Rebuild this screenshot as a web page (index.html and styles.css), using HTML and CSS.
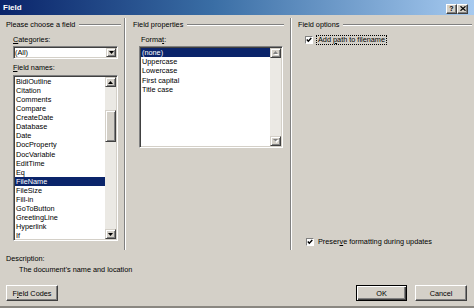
FILE: index.html
```html
<!DOCTYPE html>
<html>
<head>
<meta charset="utf-8">
<title>Field</title>
<link rel="stylesheet" href="styles.css">
</head>
<body>
<div class="window">
  <div class="titlebar">
    <span class="title">Field</span>
    <div class="tb-buttons">
      <span class="tb-btn">?</span>
      <span class="tb-btn"><svg width="6" height="5" viewBox="0 0 6 5"><path d="M0.5 0.3 L5.5 4.7 M5.5 0.3 L0.5 4.7" stroke="#000" stroke-width="1.2"/></svg></span>
    </div>
  </div>

  <div class="columns">
    <section class="col col1">
      <div class="group-head"><span>Please choose a field</span><i class="groove"></i></div>
      <div class="label"><u>C</u>ategories:</div>
      <div class="combo">
        <span class="combo-text">(All)</span>
        <span class="sb-btn"><svg width="5" height="3" viewBox="0 0 5 3"><path d="M0 0 H5 L2.5 3 Z" fill="#000"/></svg></span>
      </div>
      <div class="label"><u>F</u>ield names:</div>
      <div class="listbox names">
        <ul class="items">
          <li>BidiOutline</li>
          <li>Citation</li>
          <li>Comments</li>
          <li>Compare</li>
          <li>CreateDate</li>
          <li>Database</li>
          <li>Date</li>
          <li>DocProperty</li>
          <li>DocVariable</li>
          <li>EditTime</li>
          <li>Eq</li>
          <li class="sel">FileName</li>
          <li>FileSize</li>
          <li>Fill-in</li>
          <li>GoToButton</li>
          <li>GreetingLine</li>
          <li>Hyperlink</li>
          <li>If</li>
        </ul>
        <div class="scrollbar">
          <span class="sb-btn"><svg width="5" height="3" viewBox="0 0 5 3"><path d="M0 3 H5 L2.5 0 Z" fill="#000"/></svg></span>
          <span class="sb-thumb"></span>
          <span class="sb-fill"></span>
          <span class="sb-btn"><svg width="5" height="3" viewBox="0 0 5 3"><path d="M0 0 H5 L2.5 3 Z" fill="#000"/></svg></span>
        </div>
      </div>
    </section>

    <section class="col col2">
      <div class="group-head"><span>Field properties</span><i class="groove"></i></div>
      <div class="label">Forma<u>t</u>:</div>
      <div class="listbox formats">
        <ul class="items">
          <li class="sel">(none)</li>
          <li>Uppercase</li>
          <li>Lowercase</li>
          <li>First capital</li>
          <li>Title case</li>
        </ul>
        <div class="scrollbar">
          <span class="sb-btn"><svg width="6" height="4" viewBox="0 0 6 4"><path d="M1 4 H6 L3.5 1.5 Z" fill="#fff"/><path d="M0 3 H5 L2.5 0 Z" fill="#808080"/></svg></span>
          <span class="sb-fill"></span>
          <span class="sb-btn"><svg width="6" height="4" viewBox="0 0 6 4"><path d="M1 1 H6 L3.5 4 Z" fill="#fff"/><path d="M0 0 H5 L2.5 2.5 Z" fill="#808080"/></svg></span>
        </div>
      </div>
    </section>

    <section class="col col3">
      <div class="group-head"><span>Field options</span><i class="groove"></i></div>
      <div class="check top">
        <span class="box"><svg width="6" height="6" viewBox="0 0 6 6"><path d="M0.8 2.6 L2.3 4.2 L5.3 1" fill="none" stroke="#000" stroke-width="1.4"/></svg></span>
        <span class="check-label focus">Add <u>p</u>ath to filename</span>
      </div>
      <div class="check bottom">
        <span class="box"><svg width="6" height="6" viewBox="0 0 6 6"><path d="M0.8 2.6 L2.3 4.2 L5.3 1" fill="none" stroke="#000" stroke-width="1.4"/></svg></span>
        <span class="check-label">Preser<u>v</u>e formatting during updates</span>
      </div>
    </section>
  </div>

  <div class="desc">
    <div class="desc-label">Description:</div>
    <div class="desc-text">The document's name and location</div>
  </div>

  <div class="buttons">
    <button class="btn codes">F<u>i</u>eld Codes</button>
    <span class="spacer"></span>
    <button class="btn ok">OK</button>
    <button class="btn cancel">Cancel</button>
  </div>
</div>
</body>
</html>
```

FILE: styles.css
```css
* { box-sizing: border-box; }
html, body { margin: 0; padding: 0; }
body {
  width: 474px;
  height: 308px;
  overflow: hidden;
  background: #d4d0c8;
  font-family: "Liberation Sans", Arial, sans-serif;
  font-size: 7.3px;
  color: #000;
}
u { text-decoration: underline; text-underline-offset: 1px; }

.window {
  width: 474px;
  height: 308px;
  background: #d4d0c8;
  display: flex;
  flex-direction: column;
  border-bottom: 2px solid #8a8781;
}

.titlebar {
  height: 15px;
  flex: none;
  display: flex;
  align-items: flex-start;
  padding-left: 3px;
  padding-right: 6px;
  background: linear-gradient(to right, #0a246a 0%, #3a6ea5 45%, #a6caf0 100%);
}
.title {
  flex: 1;
  color: #fff;
  font-weight: bold;
  font-size: 8px;
  line-height: 15px;
}
.tb-buttons { display: flex; margin-top: 3.5px; }
.tb-btn {
  width: 11px;
  height: 10px;
  background: #d4d0c8;
  border: 1px solid;
  border-color: #fff #404040 #404040 #fff;
  box-shadow: inset -1px -1px #808080;
  display: flex;
  align-items: center;
  justify-content: center;
  font-size: 7px;
  font-weight: bold;
  line-height: 1;
}

.columns {
  display: grid;
  grid-template-columns: 120px 166px 1fr;
  margin-top: 3px;
  margin-left: 6px;
  height: 232px;
  flex: none;
}
.col { display: flex; flex-direction: column; }
.col1, .col2 {
  border-right: 1px solid #fff;
  box-shadow: inset -1px 0 #808080;
}

.group-head {
  height: 13px;
  display: flex;
  align-items: center;
  white-space: nowrap;
}
.groove {
  flex: 1;
  height: 2px;
  border-top: 1px solid #808080;
  border-bottom: 1px solid #fff;
  margin-left: 4px;
}
.col1 .group-head { margin-right: 4px; }
.col2 .group-head { padding-left: 7px; margin-right: 7px; }
.col3 .group-head { padding-left: 6px; margin-right: 2px; }

.label { line-height: 9px; margin-top: 4px; white-space: nowrap; }
.col1 .label { margin-left: 7px; }
.col2 .label { margin-left: 15px; }

.sunken {
  border: 1px solid;
}
.combo, .listbox {
  background: #fff;
  border: 1px solid;
  border-color: #808080 #fff #fff #808080;
  box-shadow: inset 1px 1px #404040, inset -1px -1px #d4d0c8;
  padding: 1px;
}
.combo {
  margin-top: 2px;
  margin-left: 7px;
  width: 105px;
  height: 13px;
  display: flex;
  align-items: stretch;
}
.combo-text { flex: 1; line-height: 9px; padding-left: 0; }

.sb-btn {
  width: 11px;
  height: 10px;
  flex: none;
  background: #d4d0c8;
  border: 1px solid;
  border-color: #d4d0c8 #404040 #404040 #d4d0c8;
  box-shadow: inset 1px 1px #fff, inset -1px -1px #808080;
  display: flex;
  align-items: center;
  justify-content: center;
}
.combo .sb-btn { height: 9px; width: 10px; }

.listbox { display: flex; margin-top: 3px; }
.listbox.names { margin-left: 7px; width: 105px; height: 166px; }
.listbox.formats { margin-left: 13px; width: 144px; height: 102px; margin-top: 2px; }

.items {
  flex: 1;
  list-style: none;
  margin: 0;
  padding: 0;
  overflow: hidden;
}
.items li {
  line-height: 9.07px;
  height: 9.07px;
  padding-left: 1px;
  white-space: nowrap;
}
.formats .items li { line-height: 9.2px; height: 9.2px; }
.items li.sel { background: #0a246a; color: #fff; }

.scrollbar {
  width: 11px;
  flex: none;
  display: flex;
  flex-direction: column;
  background: #ebe9e4;
}
.sb-thumb {
  height: 32px;
  margin-top: 23px;
  flex: none;
  background: #d4d0c8;
  border: 1px solid;
  border-color: #d4d0c8 #404040 #404040 #d4d0c8;
  box-shadow: inset 1px 1px #fff, inset -1px -1px #808080;
}
.sb-fill { flex: 1; }

.check {
  display: flex;
  align-items: center;
  height: 9px;
  margin-left: 13px;
  white-space: nowrap;
}
.check.top { margin-top: 4.5px; }
.check.bottom { margin-top: auto; margin-bottom: 3.5px; margin-left: 14px; }
.box {
  width: 8px;
  height: 8px;
  flex: none;
  background: #fff;
  border: 1px solid;
  border-color: #808080 #fff #fff #808080;
  display: flex;
  align-items: center;
  justify-content: center;
}
.check-label {
  margin-left: 3px;
  padding: 0 1px;
  line-height: 8px;
  border: 1px dotted transparent;
}
.check-label.focus { border-color: #000; }
.check.bottom .check-label { margin-left: 2px; }

.desc { margin-left: 6px; flex: none; }
.desc-label { margin-top: 3.5px; line-height: 9px; }
.desc-text { margin-top: 2px; margin-left: 13px; line-height: 9px; }

.buttons {
  display: flex;
  margin-top: 11.5px;
  padding-left: 6px;
  padding-right: 7px;
  height: 16px;
  flex: none;
}
.spacer { flex: 1; }
.btn {
  font-family: inherit;
  font-size: 7.3px;
  color: #000;
  height: 16px;
  padding: 0;
  background: #d4d0c8;
  border: 1px solid;
  border-color: #fff #404040 #404040 #fff;
  box-shadow: inset -1px -1px #808080;
  text-align: center;
}
.btn.codes { width: 52px; }
.btn.ok {
  width: 51px;
  border: 1px solid #000;
  box-shadow: inset 1px 1px #fff, inset -1px -1px #404040, inset -2px -2px #808080;
}
.btn.cancel { width: 52px; margin-left: 8px; }
```
